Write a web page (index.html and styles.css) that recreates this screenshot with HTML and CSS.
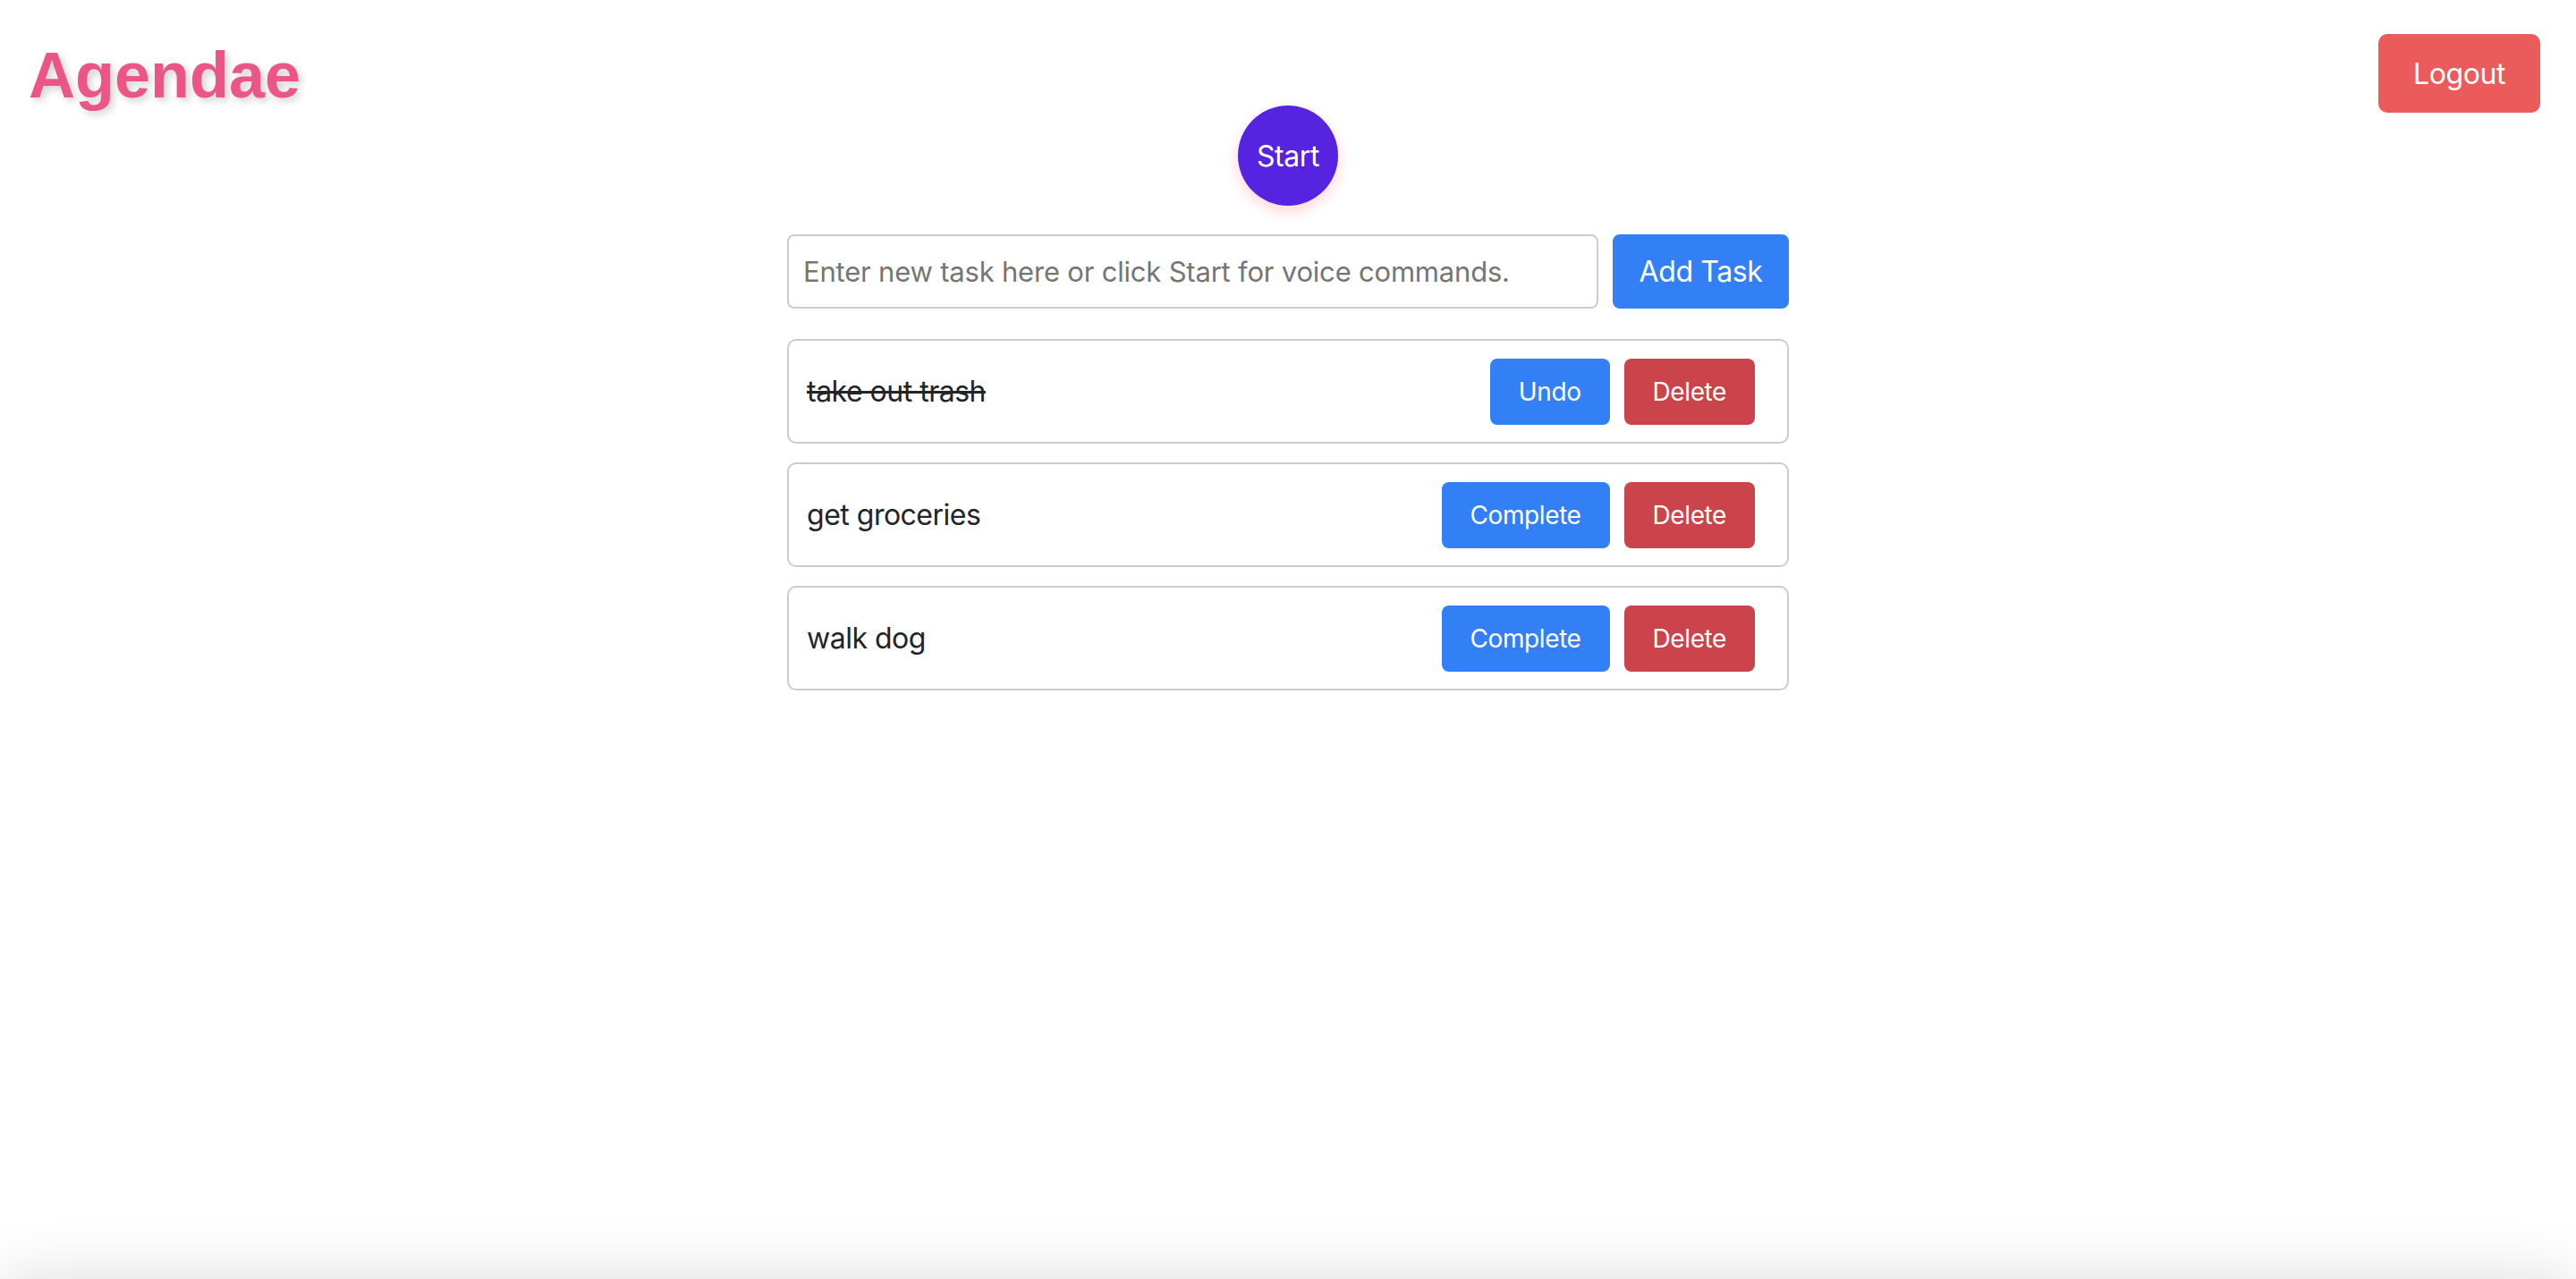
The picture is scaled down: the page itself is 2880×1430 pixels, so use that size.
FILE: index.html
```html
<!DOCTYPE html>
<html lang="en">
<head>
<meta charset="utf-8">
<title>Agendae</title>
<link rel="stylesheet" href="styles.css">
</head>
<body>
<header class="topbar">
  <h1 class="logo">Agendae</h1>
  <button class="btn btn-logout" type="button">Logout</button>
</header>
<main class="app">
  <button class="start" type="button">Start</button>
  <form class="add-row">
    <input class="task-input" type="text" placeholder="Enter new task here or click Start for voice commands.">
    <button class="btn btn-add" type="button">Add Task</button>
  </form>
  <ul class="tasks">
    <li class="task">
      <span class="task-text done">take out trash</span>
      <div class="actions">
        <button class="btn btn-sm btn-blue" type="button">Undo</button>
        <button class="btn btn-sm btn-red" type="button">Delete</button>
      </div>
    </li>
    <li class="task">
      <span class="task-text">get groceries</span>
      <div class="actions">
        <button class="btn btn-sm btn-blue" type="button">Complete</button>
        <button class="btn btn-sm btn-red" type="button">Delete</button>
      </div>
    </li>
    <li class="task">
      <span class="task-text">walk dog</span>
      <div class="actions">
        <button class="btn btn-sm btn-blue" type="button">Complete</button>
        <button class="btn btn-sm btn-red" type="button">Delete</button>
      </div>
    </li>
  </ul>
</main>
<div class="bottom-shade"></div>
</body>
</html>
```
FILE: styles.css
```css
* { box-sizing: border-box; }
html, body { margin: 0; padding: 0; background: #fff; }
body {
  font-family: Inter, "Noto Sans", "Liberation Sans", sans-serif;
  color: #212529;
  min-height: 1430px;
  overflow: hidden;
}
.topbar {
  height: 118px;
  display: flex;
  justify-content: space-between;
  align-items: flex-start;
  padding: 38px 40px 0 32px;
}
.logo {
  margin: 10px 0 0 0;
  font-family: "Liberation Sans", Arial, sans-serif;
  font-weight: 700;
  font-size: 72px;
  line-height: 72px;
  color: #ec5686;
  text-shadow: 4px 4px 8px rgba(0, 0, 0, 0.18);
}
.btn {
  border: none;
  font-family: Inter, "Noto Sans", sans-serif;
  color: #fff;
  cursor: pointer;
  border-radius: 10px;
  letter-spacing: -0.4px;
}
.btn-logout {
  width: 181px;
  height: 88px;
  font-size: 32px;
  background: #ec5b5b;
}
.app {
  width: 1120px;
  margin: 0 auto;
  display: flex;
  flex-direction: column;
  align-items: center;
}
.start {
  width: 112px;
  height: 112px;
  border-radius: 50%;
  border: none;
  background: #5624e0;
  color: #fff;
  font-family: Inter, "Noto Sans", sans-serif;
  font-size: 32px;
  letter-spacing: -0.4px;
  box-shadow: 0 6px 16px rgba(255, 80, 80, 0.25);
  margin-bottom: 32px;
}
.add-row {
  width: 100%;
  display: flex;
  gap: 16px;
  margin: 0 0 34px 0;
}
.task-input {
  flex: 1;
  height: 83px;
  border: 2px solid #cccccc;
  border-radius: 8px;
  padding: 0 16px;
  font-family: Inter, "Noto Sans", sans-serif;
  font-size: 31px;
  letter-spacing: -0.2px;
  color: #212529;
  outline: none;
}
.task-input::placeholder { color: #757575; }
.btn-add {
  flex: 0 0 197px;
  height: 83px;
  padding: 0;
  font-size: 32px;
  background: #3380f6;
  border-radius: 8px;
}
.tasks {
  list-style: none;
  margin: 0;
  padding: 0;
  width: 100%;
  display: flex;
  flex-direction: column;
  gap: 21px;
}
.task {
  height: 117px;
  border: 2px solid #cccccc;
  border-radius: 10px;
  display: flex;
  align-items: center;
  justify-content: space-between;
  padding: 0 36px 0 20px;
}
.task-text {
  font-size: 32px;
  letter-spacing: -0.5px;
  color: #212529;
}
.task-text.done { text-decoration: line-through; }
.actions {
  display: flex;
  gap: 16px;
}
.btn-sm {
  height: 74px;
  padding: 0 32px;
  font-size: 28px;
  border-radius: 8px;
}
.btn-blue { background: #3380f6; }
.btn-red { background: #cb444b; }
.bottom-shade {
  position: fixed;
  left: 0;
  right: 0;
  top: 100%;
  height: 120px;
  box-shadow: 0 0 70px rgba(0, 0, 0, 0.14);
}
```
